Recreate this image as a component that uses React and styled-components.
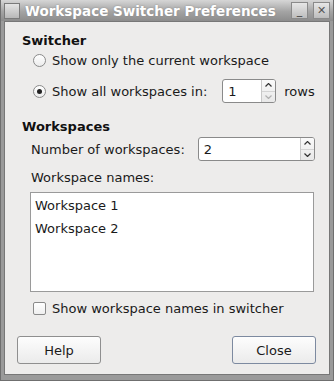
import styled, { createGlobalStyle } from "styled-components";

const GlobalStyle = createGlobalStyle`
  html, body { margin: 0; padding: 0; background: #8e8e8e; }
  body { font-family: "DejaVu Sans", "Liberation Sans", sans-serif; }
`;

const Window = styled.div`
  width: 334px;
  height: 381px;
  box-sizing: border-box;
  display: flex;
  flex-direction: column;
  background: #9a9a9a;
  border: 1px solid #6f6f6f;
  border-top: none;
  padding: 0 3px 5px 3px;
`;

const TitleBar = styled.div`
  height: 21px;
  display: flex;
  align-items: center;
  gap: 5px;
  background: linear-gradient(#d6d6d6, #a4a4a4 55%, #8c8c8c);
  margin: 0 -3px;
  padding: 0 3px;
`;

const WinIcon = styled.div`
  width: 14px;
  height: 14px;
  border: 1px solid #7a7a7a;
  background: linear-gradient(#e4e4e4, #b8b8b8);
`;

const Title = styled.div`
  flex: 1;
  color: #fff;
  font-weight: bold;
  font-size: 13.5px;
  text-shadow: 0 0 2px #888;
  white-space: nowrap;
`;

const TitleButton = styled.div`
  width: 15px;
  height: 15px;
  border: 1px solid #8a8a8a;
  background: linear-gradient(#e6e6e6, #bdbdbd);
  display: flex;
  align-items: center;
  justify-content: center;
  color: #555;
  font-size: 11px;
  font-weight: bold;
`;

const Body = styled.div`
  flex: 1;
  background: #edeceb;
  border: 1px solid #777;
  display: flex;
  flex-direction: column;
  padding: 10px 13px 10px 13px;
  font-size: 13px;
  color: #1a1a1a;
`;

const Heading = styled.div`
  font-weight: bold;
  height: 18px;
  line-height: 18px;
  color: #111;
  margin: ${p => p.$mt || 0}px 0 0 4px;
`;

const Row = styled.div`
  display: flex;
  align-items: center;
  white-space: nowrap;
  margin: ${p => p.$mt || 0}px 0 0 ${p => p.$indent || 15}px;
  height: ${p => p.$h || 20}px;
`;

const Radio = styled.span`
  width: 11px;
  height: 11px;
  border-radius: 50%;
  border: 1px solid #8a8a8a;
  background: linear-gradient(#fff, #ececec);
  margin-right: 6px;
  display: flex;
  align-items: center;
  justify-content: center;
  &::after {
    content: "";
    width: 5px;
    height: 5px;
    border-radius: 50%;
    background: ${p => (p.$on ? "#222" : "transparent")};
  }
`;

const Check = styled.span`
  width: 11px;
  height: 11px;
  border: 1px solid #8a8a8a;
  border-radius: 2px;
  background: linear-gradient(#fff, #efefef);
  margin-right: 6px;
`;

const Spin = styled.div`
  display: flex;
  height: 24px;
  box-sizing: border-box;
  width: ${p => p.$w}px;
  margin-left: ${p => p.$ml}px;
  border: 1px solid #8a8a8a;
  border-radius: 3px;
  background: #fff;
  overflow: hidden;
`;

const SpinText = styled.div`
  flex: 1;
  padding-left: 5px;
  display: flex;
  align-items: center;
`;

const SpinArrows = styled.div`
  width: 13px;
  display: flex;
  flex-direction: column;
  border-left: 1px solid #c8c8c8;
  background: linear-gradient(#fafafa, #e8e8e8);
`;

const Arrow = styled.div`
  flex: 1;
  display: flex;
  align-items: center;
  justify-content: center;
  & + & { border-top: 1px solid #d4d4d4; }
`;

const Unit = styled.span`
  margin-left: 8px;
`;

const List = styled.div`
  margin: 5px 2px 0 12px;
  height: 100px;
  box-sizing: border-box;
  border: 1px solid #9a9a9a;
  background: #fff;
  padding: 1px 4px;
`;

const ListItem = styled.div`
  height: 23px;
  line-height: 23px;
`;

const Spacer = styled.div`
  flex: 1;
`;

const Buttons = styled.div`
  display: flex;
  justify-content: space-between;
  margin-left: -1px;
`;

const Button = styled.div`
  width: 84px;
  height: 28px;
  box-sizing: border-box;
  border: 1px solid ${p => (p.$def ? "#7d8aa0" : "#8f8f8f")};
  border-radius: 3px;
  background: linear-gradient(#fdfdfd, #ebebeb);
  display: flex;
  align-items: center;
  justify-content: center;
`;

const ArrowIcon = ({ up, faded }) => (
  <svg width="7" height="4" viewBox="0 0 7 4">
    <polyline
      points={up ? "0.5,3.5 3.5,0.5 6.5,3.5" : "0.5,0.5 3.5,3.5 6.5,0.5"}
      fill="none"
      stroke={faded ? "#b0b0b0" : "#333"}
      strokeWidth="1.2"
    />
  </svg>
);

export default function App() {
  return (
    <>
      <GlobalStyle />
      <Window>
        <TitleBar>
          <WinIcon />
          <Title>Workspace Switcher Preferences</Title>
          <TitleButton>_</TitleButton>
          <TitleButton>✕</TitleButton>
        </TitleBar>
        <Body>
          <Heading>Switcher</Heading>
          <Row>
            <Radio />
            Show only the current workspace
          </Row>
          <Row $h={30} $mt={6}>
            <Radio $on />
            Show all workspaces in:
            <Spin $w={54} $ml={15}>
              <SpinText>1</SpinText>
              <SpinArrows>
                <Arrow><ArrowIcon up /></Arrow>
                <Arrow><ArrowIcon faded /></Arrow>
              </SpinArrows>
            </Spin>
            <Unit>rows</Unit>
          </Row>
          <Heading $mt={12}>Workspaces</Heading>
          <Row $indent={13} $h={24} $mt={1}>
            Number of workspaces:
            <Spin $w={117} $ml={13}>
              <SpinText>2</SpinText>
              <SpinArrows>
                <Arrow><ArrowIcon up /></Arrow>
                <Arrow><ArrowIcon /></Arrow>
              </SpinArrows>
            </Spin>
          </Row>
          <Row $indent={13} $mt={6}>Workspace names:</Row>
          <List>
            <ListItem>Workspace 1</ListItem>
            <ListItem>Workspace 2</ListItem>
          </List>
          <Row $mt={6}>
            <Check />
            Show workspace names in switcher
          </Row>
          <Spacer />
          <Buttons>
            <Button>Help</Button>
            <Button $def>Close</Button>
          </Buttons>
        </Body>
      </Window>
    </>
  );
}
